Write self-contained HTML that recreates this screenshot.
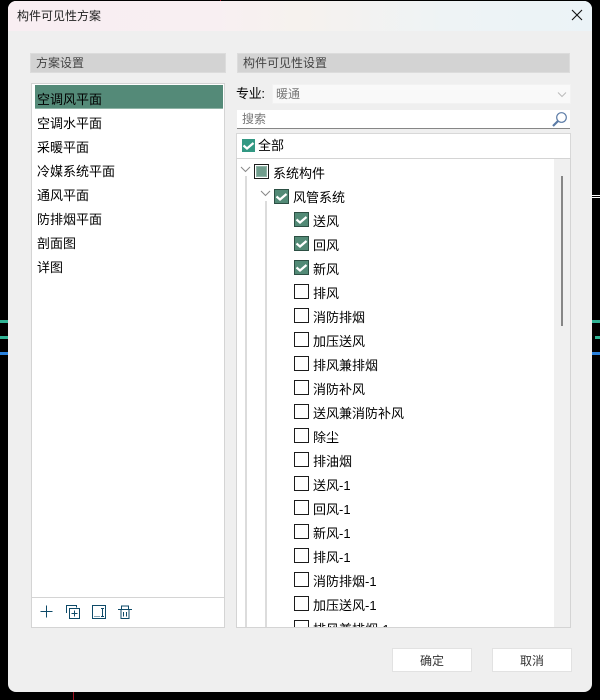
<!DOCTYPE html>
<html><head><meta charset="utf-8">
<style>
html,body{margin:0;padding:0;width:600px;height:700px;overflow:hidden;background:#000}
*{box-sizing:border-box}
div,span{position:absolute}
body{font-family:"Liberation Sans","WenQuanYi Zen Hei","Noto Sans CJK SC",sans-serif;font-size:13px;color:#000}
#dlg{left:8px;top:1px;width:584px;height:691px;background:#efefef;border-radius:8px;overflow:hidden}
#tb{left:0;top:0;width:584px;height:30px;background:linear-gradient(90deg,#f8eef2 0%,#f8eff2 35%,#f6f2ee 50%,#eef3f5 75%,#ebf3f7 100%)}
.t{white-space:nowrap;line-height:16px;height:16px}
.g{font-family:"Liberation Sans","Noto Sans CJK SC",sans-serif;font-size:12px;color:#333}
.hd{background:#d3d3d3;border:1px solid #dcdcdc;height:20px;top:53px}
.c{width:15px;height:15px;border:1px solid #1c1c1c;background:#fff}
.on{border:1px solid #2c4f43;background:#528a76}
.on svg{position:absolute;left:0;top:0}
.ln{background:#dcdcdc;width:2px}
</style></head><body>
<div style="left:0;top:320px;width:8px;height:3px;background:#2fb394"></div>
<div style="left:0;top:336px;width:8px;height:3px;background:#2fb394"></div>
<div style="left:0;top:352px;width:8px;height:3px;background:#2a82de"></div>
<div style="left:592px;top:320px;width:8px;height:3px;background:#2fb394"></div>
<div style="left:595px;top:336px;width:5px;height:3px;background:#2fb394"></div>
<div style="left:592px;top:352px;width:8px;height:3px;background:#2a82de"></div>
<div style="left:592px;top:195px;width:8px;height:1px;background:#fff"></div>
<div style="left:592px;top:197px;width:8px;height:1px;background:#fff"></div>
<div style="left:73px;top:692px;width:1px;height:8px;background:#a01020"></div>
<div style="left:220px;top:0;width:1px;height:1px;background:#a01020"></div>

<div id="dlg"><div id="tb"></div></div>
<span class="t g" style="left:17px;top:8px;color:#222">构件可见性方案</span>
<svg style="position:absolute;left:571px;top:9px" width="12" height="12"><path d="M1 1L11 11M11 1L1 11" stroke="#111" stroke-width="1.100" fill="none"/></svg>

<div class="hd" style="left:30px;width:196px"></div>
<span class="t g" style="left:36px;top:55px;color:#444">方案设置</span>
<div class="hd" style="left:237px;width:333px"></div>
<span class="t g" style="left:243px;top:55px;color:#444">构件可见性设置</span>

<div style="left:31px;top:83px;width:194px;height:545px;background:#fff;border:1px solid #d4d4d4"></div>
<div style="left:35px;top:85px;width:188px;height:24px;background:#548a78;border-bottom:1px solid #8fb3a6"></div>
<span class="t" style="left:37px;top:92px">空调风平面</span>
<span class="t" style="left:37px;top:116px">空调水平面</span>
<span class="t" style="left:37px;top:140px">采暖平面</span>
<span class="t" style="left:37px;top:164px">冷媒系统平面</span>
<span class="t" style="left:37px;top:188px">通风平面</span>
<span class="t" style="left:37px;top:212px">防排烟平面</span>
<span class="t" style="left:37px;top:236px">剖面图</span>
<span class="t" style="left:37px;top:260px">详图</span>
<div style="left:32px;top:597px;width:192px;height:1px;background:#d4d4d4"></div>

<svg style="position:absolute;left:38px;top:604px" width="100" height="16" fill="none" stroke="#0e4a68" stroke-width="1">
<path d="M2.500 7.500H14.500M8.500 1.500V13.500"/>
<path d="M28.500 9V1.500H38.500V3.500M31.500 4.500H41.500V14.500H31.500ZM33.500 9.500H39.500M36.500 6.500V12.500"/>
<path d="M54.500 1.500H67.500V14.500H54.500ZM63 4.500H66M63 12.500H66M64.500 4.500V12.500"/>
<path d="M56.500 12.500h1M58.500 12.500h1M60.500 12.500h1"/>
<path d="M80 5.500H94M83.500 5.500V2H90.500V5.500M83 5.500V14.500H91V5.500M85.500 8V12.500M88.500 8V12.500"/>
</svg>

<span class="t" style="left:236px;top:86px;font-size:13px;letter-spacing:-.3px">专业:</span>
<div style="left:272px;top:84px;width:299px;height:20px;background:#f9f9f9;border:1px solid #f2f2f2"></div>
<span class="t g" style="left:276px;top:86px;color:#777">暖通</span>
<svg style="position:absolute;left:557px;top:91px" width="10" height="7"><path d="M1 1.500L5 5.500L9 1.500" stroke="#bbb" fill="none"/></svg>

<div style="left:237px;top:110px;width:333px;height:19px;background:#fff;border-bottom:1px solid #868686"></div>
<span class="t g" style="left:242px;top:111px;color:#777">搜索</span>
<svg style="position:absolute;left:551px;top:111px" width="17" height="17" fill="none"><circle cx="10.500" cy="6.500" r="4.800" stroke="#5b7ba6" stroke-width="1.200"/><path d="M7 10L2 15" stroke="#5b7ba6" stroke-width="2.200"/></svg>

<div style="left:236px;top:133px;width:335px;height:26px;background:#fff;border:1px solid #d8d8d8"></div>
<div style="left:242px;top:139px;width:13px;height:13px;background:#329883"></div>
<svg style="position:absolute;left:242px;top:139px" width="13" height="13"><path d="M1.500 6.500L5 9.500L11.500 4" stroke="#fff" stroke-width="2.200" fill="none"/></svg>
<span class="t" style="left:258px;top:138px;font-size:13px">全部</span>

<div style="left:236px;top:158px;width:335px;height:470px;background:#fff;border:1px solid #d4d4d4;overflow:hidden"></div>
<div style="left:554px;top:159px;width:16px;height:468px;background:#f0f0f0"></div>
<div style="left:561px;top:176px;width:2px;height:150px;background:#868686"></div>
<div class="ln" style="left:245px;top:176px;height:451px"></div>
<div class="ln" style="left:265px;top:201px;height:426px"></div>

<svg style="position:absolute;left:240px;top:166px" width="40" height="32" fill="none" stroke="#888"><path d="M1 2L5.500 6.500L10 2M21 26L25.500 30.500L30 26" transform="translate(0,-1)"/></svg>
<div class="c" style="left:254px;top:164px;background:#fff"><div style="left:2px;top:2px;width:9px;height:9px;background:#6f9c8c;outline:1px solid #8fb3a6"></div></div>
<span class="t" style="left:273px;top:166px">系统构件</span>

<div class="c on" style="left:274px;top:189px"><svg width="13" height="13"><path d="M1.500 6.500L5 9.500L11.500 4" stroke="#fff" stroke-width="2.200" fill="none"/></svg></div>
<span class="t" style="left:293px;top:190px">风管系统</span>

<div class="c on" style="left:294px;top:212px"><svg width="13" height="13"><path d="M1.500 6.500L5 9.500L11.500 4" stroke="#fff" stroke-width="2.200" fill="none"/></svg></div>
<span class="t" style="left:313px;top:214px">送风</span>
<div class="c on" style="left:294px;top:236px"><svg width="13" height="13"><path d="M1.500 6.500L5 9.500L11.500 4" stroke="#fff" stroke-width="2.200" fill="none"/></svg></div>
<span class="t" style="left:313px;top:238px">回风</span>
<div class="c on" style="left:294px;top:260px"><svg width="13" height="13"><path d="M1.500 6.500L5 9.500L11.500 4" stroke="#fff" stroke-width="2.200" fill="none"/></svg></div>
<span class="t" style="left:313px;top:262px">新风</span>

<div class="c" style="left:294px;top:284px"></div><span class="t" style="left:313px;top:286px">排风</span>
<div class="c" style="left:294px;top:308px"></div><span class="t" style="left:313px;top:310px">消防排烟</span>
<div class="c" style="left:294px;top:332px"></div><span class="t" style="left:313px;top:334px">加压送风</span>
<div class="c" style="left:294px;top:356px"></div><span class="t" style="left:313px;top:358px">排风兼排烟</span>
<div class="c" style="left:294px;top:380px"></div><span class="t" style="left:313px;top:382px">消防补风</span>
<div class="c" style="left:294px;top:404px"></div><span class="t" style="left:313px;top:406px">送风兼消防补风</span>
<div class="c" style="left:294px;top:428px"></div><span class="t" style="left:313px;top:430px">除尘</span>
<div class="c" style="left:294px;top:452px"></div><span class="t" style="left:313px;top:454px">排油烟</span>
<div class="c" style="left:294px;top:476px"></div><span class="t" style="left:313px;top:478px">送风-1</span>
<div class="c" style="left:294px;top:500px"></div><span class="t" style="left:313px;top:502px">回风-1</span>
<div class="c" style="left:294px;top:524px"></div><span class="t" style="left:313px;top:526px">新风-1</span>
<div class="c" style="left:294px;top:548px"></div><span class="t" style="left:313px;top:550px">排风-1</span>
<div class="c" style="left:294px;top:572px"></div><span class="t" style="left:313px;top:574px">消防排烟-1</span>
<div class="c" style="left:294px;top:596px"></div><span class="t" style="left:313px;top:598px">加压送风-1</span>
<div style="left:238px;top:620px;width:316px;height:7px;overflow:hidden">
<div class="c" style="left:56px;top:0"></div><span class="t" style="left:75px;top:2px">排风兼排烟-1</span>
</div>

<div style="left:392px;top:648px;width:80px;height:24px;background:#fff;border:1px solid #e2e2e2"></div>
<span class="t g" style="left:420px;top:653px;color:#333">确定</span>
<div style="left:492px;top:648px;width:80px;height:24px;background:#fff;border:1px solid #e2e2e2"></div>
<span class="t g" style="left:520px;top:653px;color:#333">取消</span>
</body></html>
